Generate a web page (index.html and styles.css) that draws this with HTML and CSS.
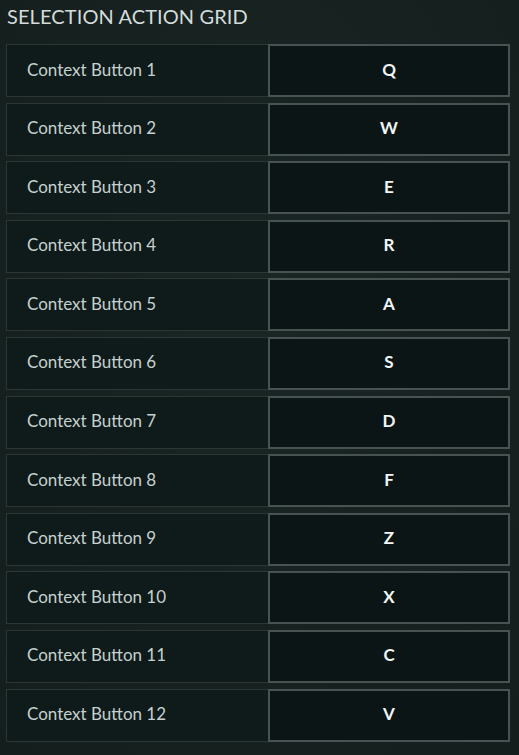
FILE: index.html
```html
<!DOCTYPE html>
<html lang="en">
<head>
  <meta charset="UTF-8">
  <title>Selection Action Grid</title>
  <link rel="stylesheet" href="styles.css">
</head>
<body>
  <div class="panel">
    <h2 class="title">SELECTION ACTION GRID</h2>

    <div class="grid">
      <div class="row"><div class="label">Context Button 1</div><div class="key">Q</div></div>
      <div class="row"><div class="label">Context Button 2</div><div class="key">W</div></div>
      <div class="row"><div class="label">Context Button 3</div><div class="key">E</div></div>
      <div class="row"><div class="label">Context Button 4</div><div class="key">R</div></div>
      <div class="row"><div class="label">Context Button 5</div><div class="key">A</div></div>
      <div class="row"><div class="label">Context Button 6</div><div class="key">S</div></div>
      <div class="row"><div class="label">Context Button 7</div><div class="key">D</div></div>
      <div class="row"><div class="label">Context Button 8</div><div class="key">F</div></div>
      <div class="row"><div class="label">Context Button 9</div><div class="key">Z</div></div>
      <div class="row"><div class="label">Context Button 10</div><div class="key">X</div></div>
      <div class="row"><div class="label">Context Button 11</div><div class="key">C</div></div>
      <div class="row"><div class="label">Context Button 12</div><div class="key">V</div></div>
    </div>
  </div>
</body>
</html>
```

FILE: styles.css
```css
html, body {
  margin: 0;
  padding: 0;
}

body {
  font-family: Lato, "Noto Sans", sans-serif;
  background: #16211f;
  background-image: radial-gradient(ellipse at 50% 40%, #1a2624 0%, #141e1d 100%);
  min-height: 755px;
  color: #c9d4d2;
}

.panel {
  padding: 3px 9px 0 6px;
}

.title {
  margin: 0 0 15px 1px;
  font-size: 20px;
  font-weight: 400;
  letter-spacing: 0.1px;
  color: #d3dcda;
  line-height: 26px;
}

.grid {
  display: flex;
  flex-direction: column;
  gap: 5.6px;
}

.row {
  display: flex;
  height: 53px;
}

.label {
  flex: 0 0 262px;
  box-sizing: border-box;
  display: flex;
  align-items: center;
  padding: 0 0 3px 20px;
  background: #0f1a1a;
  border: 1px solid #2b3735;
  border-right: none;
  font-size: 17px;
  color: #c5d1cf;
}

.key {
  flex: 1;
  box-sizing: border-box;
  display: flex;
  align-items: center;
  justify-content: center;
  padding-bottom: 3px;
  background: #0b1515;
  border: 2px solid #465352;
  font-size: 17px;
  font-weight: 700;
  color: #f2f5f5;
}
```
